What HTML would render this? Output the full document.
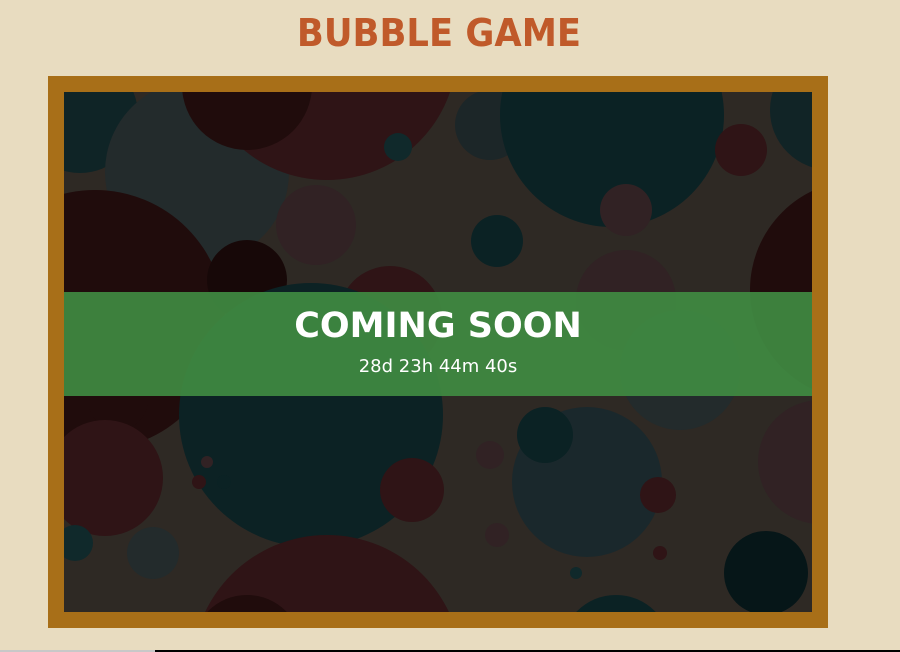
<!DOCTYPE html>
<html><head><meta charset="utf-8"><style>
html,body{margin:0;padding:0;overflow:hidden;width:900px;height:652px;}
body{background:#e8dcc0;position:relative;font-family:"DejaVu Sans","Liberation Sans",sans-serif;}
h1{position:absolute;top:11px;left:0;width:878px;margin:0;text-align:center;color:#c05a2a;font-size:38px;font-weight:bold;transform:scaleX(0.93);}
.frame{position:absolute;left:48px;top:76px;width:780px;height:552px;background:#a86f18;overflow:hidden;}
.inner{position:absolute;left:16px;top:16px;width:748px;height:520px;background:#2e2924;overflow:hidden;}
.inner svg{display:block;overflow:hidden;}
.band{position:absolute;left:64px;top:292px;width:748px;height:104px;background:rgba(64,138,66,0.93);color:#fff;text-align:center;overflow:hidden;}
.band .t{position:absolute;top:14px;width:100%;font-size:35px;font-weight:bold;}
.band .c{position:absolute;top:64px;width:100%;font-size:18px;}
.line1{position:absolute;left:0;top:650px;width:155px;height:2px;background:#c8c8c8;}
.line2{position:absolute;left:155px;top:650px;width:745px;height:2px;background:#000;}
</style></head><body>
<h1>BUBBLE GAME</h1>
<div class="frame"><div class="inner">
<svg width="748" height="520" viewBox="64 92 748 520" xmlns="http://www.w3.org/2000/svg">
<circle cx="80" cy="115" r="58" fill="#0f2426"/>
<circle cx="197" cy="172" r="92" fill="#232b2c"/>
<circle cx="327" cy="50" r="130" fill="#2f1416"/>
<circle cx="247" cy="85" r="65" fill="#200c0c"/>
<circle cx="398" cy="147" r="14" fill="#10292b"/>
<circle cx="490" cy="125" r="35" fill="#1c2628"/>
<circle cx="612" cy="115" r="112" fill="#0b2224"/>
<circle cx="741" cy="150" r="26" fill="#2f1416"/>
<circle cx="830" cy="110" r="60" fill="#112426"/>
<circle cx="316" cy="225" r="40" fill="#312224"/>
<circle cx="497" cy="241" r="26" fill="#0b2224"/>
<circle cx="626" cy="210" r="26" fill="#312224"/>
<circle cx="95" cy="320" r="130" fill="#200c0c"/>
<circle cx="247" cy="280" r="40" fill="#170808"/>
<circle cx="390" cy="318" r="52" fill="#2f1416"/>
<circle cx="626" cy="300" r="50" fill="#312224"/>
<circle cx="860" cy="290" r="110" fill="#200c0c"/>
<circle cx="311" cy="415" r="132" fill="#0c2224"/>
<circle cx="118" cy="400" r="30" fill="#200c0c"/>
<circle cx="680" cy="370" r="60" fill="#232b2c"/>
<circle cx="587" cy="482" r="75" fill="#1a282c"/>
<circle cx="545" cy="435" r="28" fill="#0b2224"/>
<circle cx="105" cy="478" r="58" fill="#2f1416"/>
<circle cx="412" cy="490" r="32" fill="#2f1416"/>
<circle cx="490" cy="455" r="14" fill="#312224"/>
<circle cx="820" cy="462" r="62" fill="#312224"/>
<circle cx="207" cy="462" r="6" fill="#312224"/>
<circle cx="199" cy="482" r="7" fill="#2f1416"/>
<circle cx="224" cy="482" r="7" fill="#0b2224"/>
<circle cx="658" cy="495" r="18" fill="#2f1416"/>
<circle cx="497" cy="535" r="12" fill="#312224"/>
<circle cx="75" cy="543" r="18" fill="#10292b"/>
<circle cx="153" cy="553" r="26" fill="#232b2c"/>
<circle cx="327" cy="670" r="135" fill="#2f1416"/>
<circle cx="247" cy="650" r="55" fill="#200c0c"/>
<circle cx="660" cy="553" r="7" fill="#2f1416"/>
<circle cx="576" cy="573" r="6" fill="#10292b"/>
<circle cx="766" cy="573" r="42" fill="#061618"/>
<circle cx="616" cy="650" r="55" fill="#0b2224"/>
</svg>
</div></div>
<div class="band"><div class="t">COMING SOON</div><div class="c">28d 23h 44m 40s</div></div>
<div class="line1"></div><div class="line2"></div>
</body></html>
